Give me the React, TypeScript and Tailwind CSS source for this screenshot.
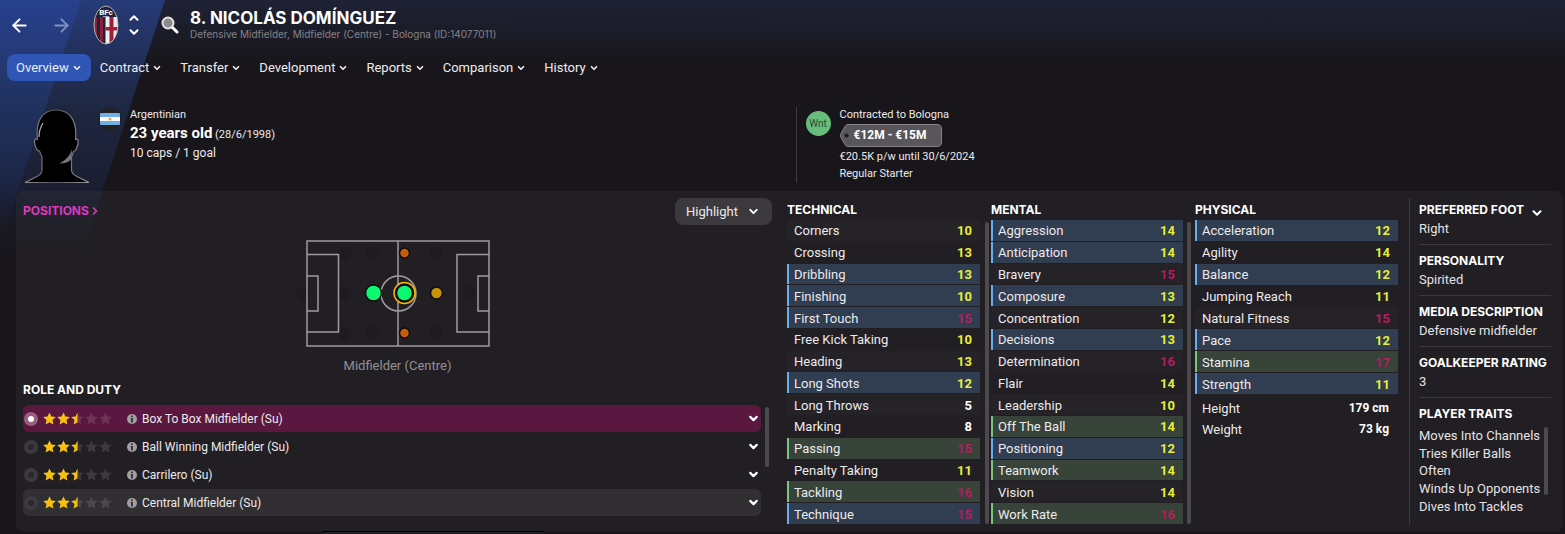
import React from 'react';
import { ArrowLeft, ArrowRight, ChevronDown, ChevronRight, ChevronUp } from 'lucide-react';

type Highlight = 'blue' | 'green' | undefined;

type Attribute = {
  name: string;
  value: number;
  highlight?: Highlight;
};

const menus = ['Overview', 'Contract', 'Transfer', 'Development', 'Reports', 'Comparison', 'History'];

const technical: Attribute[] = [
  { name: 'Corners', value: 10 },
  { name: 'Crossing', value: 13 },
  { name: 'Dribbling', value: 13, highlight: 'blue' },
  { name: 'Finishing', value: 10, highlight: 'blue' },
  { name: 'First Touch', value: 15, highlight: 'blue' },
  { name: 'Free Kick Taking', value: 10 },
  { name: 'Heading', value: 13 },
  { name: 'Long Shots', value: 12, highlight: 'blue' },
  { name: 'Long Throws', value: 5 },
  { name: 'Marking', value: 8 },
  { name: 'Passing', value: 15, highlight: 'green' },
  { name: 'Penalty Taking', value: 11 },
  { name: 'Tackling', value: 16, highlight: 'green' },
  { name: 'Technique', value: 15, highlight: 'blue' },
];

const mental: Attribute[] = [
  { name: 'Aggression', value: 14, highlight: 'blue' },
  { name: 'Anticipation', value: 14, highlight: 'blue' },
  { name: 'Bravery', value: 15 },
  { name: 'Composure', value: 13, highlight: 'blue' },
  { name: 'Concentration', value: 12 },
  { name: 'Decisions', value: 13, highlight: 'blue' },
  { name: 'Determination', value: 16 },
  { name: 'Flair', value: 14 },
  { name: 'Leadership', value: 10 },
  { name: 'Off The Ball', value: 14, highlight: 'green' },
  { name: 'Positioning', value: 12, highlight: 'blue' },
  { name: 'Teamwork', value: 14, highlight: 'green' },
  { name: 'Vision', value: 14 },
  { name: 'Work Rate', value: 16, highlight: 'green' },
];

const physical: Attribute[] = [
  { name: 'Acceleration', value: 12, highlight: 'blue' },
  { name: 'Agility', value: 14 },
  { name: 'Balance', value: 12, highlight: 'blue' },
  { name: 'Jumping Reach', value: 11 },
  { name: 'Natural Fitness', value: 15 },
  { name: 'Pace', value: 12, highlight: 'blue' },
  { name: 'Stamina', value: 17, highlight: 'green' },
  { name: 'Strength', value: 11, highlight: 'blue' },
];

const roles = [
  'Box To Box Midfielder (Su)',
  'Ball Winning Midfielder (Su)',
  'Carrilero (Su)',
  'Central Midfielder (Su)',
];

const details = [
  { title: 'Preferred Foot', text: 'Right' },
  { title: 'Personality', text: 'Spirited' },
  { title: 'Media Description', text: 'Defensive midfielder' },
  { title: 'Goalkeeper Rating', text: '3' },
];

const traits = ['Moves Into Channels', 'Tries Killer Balls Often', 'Winds Up Opponents', 'Dives Into Tackles'];

const heading = "font-['Inter',sans-serif] text-[12px] leading-4 font-bold uppercase text-white";

const valueColor = (value: number) => {
  if (value >= 15) return 'text-[#b51d5c]';
  if (value >= 10) return 'text-[#e6ee3c]';
  return 'text-white';
};

const rowColor = (highlight: Highlight, index: number) => {
  if (highlight === 'blue') return 'bg-[#313d50] border-[#68aef0]';
  if (highlight === 'green') return 'bg-[#38433a] border-[#7cc682]';
  return index % 2 === 0 ? 'bg-[#252328] border-transparent' : 'border-transparent';
};

const Backdrop = () => (
  <svg className="pointer-events-none absolute top-0 left-0" width="180" height="300" viewBox="0 0 180 300" aria-hidden="true">
    <defs>
      <linearGradient id="bright" gradientUnits="userSpaceOnUse" x1="0" y1="0" x2="0" y2="260">
        <stop offset="0" stopColor="#28418f" />
        <stop offset="0.4" stopColor="#213260" />
        <stop offset="0.7" stopColor="#1c2544" />
        <stop offset="1" stopColor="#18161b" stopOpacity="0" />
      </linearGradient>
      <linearGradient id="dim" gradientUnits="userSpaceOnUse" x1="0" y1="0" x2="0" y2="280">
        <stop offset="0" stopColor="#263b78" />
        <stop offset="0.2" stopColor="#222f5a" />
        <stop offset="0.4" stopColor="#1e2640" />
        <stop offset="0.65" stopColor="#1c1f32" />
        <stop offset="1" stopColor="#18161b" stopOpacity="0" />
      </linearGradient>
    </defs>
    <path d="M0 0H165L67 300H0Z" fill="url(#dim)" />
    <path d="M0 0H81L0 246Z" fill="url(#bright)" />
  </svg>
);

const Crest = () => (
  <svg width="26" height="40" viewBox="0 0 26 40" role="img" aria-label="Bologna">
    <clipPath id="crest">
      <ellipse cx="13" cy="20" rx="12" ry="19" />
    </clipPath>
    <g clipPath="url(#crest)">
      <rect width="26" height="40" fill="#1b2340" />
      <rect y="13" width="4" height="27" fill="#8e2036" />
      <rect x="7" y="12" width="3" height="28" fill="#8e2036" />
      <rect x="12.500" y="12" width="13.500" height="28" fill="#f1eeee" />
      <rect x="16.500" y="12" width="4" height="28" fill="#9c2039" />
      <rect x="12.500" y="22" width="13.500" height="3.500" fill="#9c2039" />
      <text x="13" y="9.500" textAnchor="middle" fontSize="8" fontWeight="700" fill="#fff" fontFamily="Roboto, sans-serif">BFc</text>
      <path d="M10 11.500H16" stroke="#aab" strokeWidth="1" />
    </g>
    <ellipse cx="13" cy="20" rx="12" ry="19" fill="none" stroke="#b9b3a8" />
  </svg>
);

const SearchIcon = () => (
  <svg width="18" height="18" viewBox="0 0 18 18" aria-hidden="true">
    <circle cx="7" cy="7" r="5.500" fill="#8b898d" stroke="#e4e1e2" strokeWidth="2" />
    <path d="M11.500 11.500L16 16" stroke="#fff" strokeWidth="3" strokeLinecap="round" />
  </svg>
);

const Portrait = () => (
  <svg width="66" height="74" viewBox="0 0 66 74" role="img" aria-label="Nicolás Domínguez">
    <defs>
      <linearGradient id="rim" x1="0" y1="0" x2="1" y2="0">
        <stop offset="0" stopColor="#8d8a90" />
        <stop offset="0.45" stopColor="#55535a" />
        <stop offset="1" stopColor="#98949a" />
      </linearGradient>
    </defs>
    <path
      d="M1 73.500L13 67.500Q18 65 18 61V48L15.500 42C12 42 9.500 33 11 30.500C12 29.500 13 30 13.500 31C11.500 12 18 1 32 1C46 1 53.500 12 51.500 31C52 30 54 29.500 54 31.500C54.500 35 52.500 42 49.500 42.500L47.500 48V61Q47.500 65 53 67.500L65 73.500Z"
      fill="#000"
      stroke="url(#rim)"
      strokeWidth="1.200"
    />
    <path d="M19 14C16.500 18 15 22 15 28" stroke="#b5b1b6" strokeWidth="1.200" fill="none" />
    <path d="M48 40C46 47 42 51 35 54.500C41 54.500 45 53 47.500 50Z" fill="#77747b" />
  </svg>
);

const Flag = () => (
  <svg width="24" height="24" viewBox="0 0 24 24" role="img" aria-label="Argentina">
    <circle cx="12" cy="12" r="11.500" fill="#222126" />
    <rect x="2" y="6" width="20" height="12" rx="1" fill="#6fb1e4" />
    <rect x="2" y="10" width="20" height="4" fill="#fff" />
    <circle cx="12" cy="12" r="1.500" fill="#d9a441" />
  </svg>
);

const InfoIcon = () => (
  <svg width="10" height="10" viewBox="0 0 10 10" aria-hidden="true">
    <circle cx="5" cy="5" r="5" fill="#a19fa3" />
    <path d="M4.200 1.500H5.800V3H4.200ZM3.700 4H5.800V8.500H4.200V5H3.700Z" fill="#232126" />
  </svg>
);

const starPath = 'M6.5 0.5L8.400 4.600L12.800 5.100L9.500 8.100L10.400 12.500L6.500 10.300L2.600 12.500L3.500 8.100L0.200 5.100L4.600 4.600Z';

const Stars = () => (
  <svg width="70" height="13" viewBox="0 0 70 13" role="img" aria-label="2.5 stars">
    <clipPath id="rated">
      <rect width="34.500" height="13" />
    </clipPath>
    {[0, 14, 28, 42, 56].map((x) => (
      <path key={x} d={starPath} transform={`translate(${x} 0)`} fill="#fff" fillOpacity="0.12" />
    ))}
    <g clipPath="url(#rated)">
      {[0, 14, 28].map((x) => (
        <path key={x} d={starPath} transform={`translate(${x} 0)`} fill="#f8c20c" />
      ))}
    </g>
  </svg>
);

const Pitch = () => (
  <svg className="mx-auto block overflow-visible" width="184" height="107" viewBox="0 0 184 107" role="img" aria-label="Positions on the pitch">
    <g fill="#1d1b20">
      {[[39, 13], [67, 13], [130, 13], [39, 53], [-3, 53], [163, 53], [39, 93], [67, 93], [130, 93]].map(([x, y]) => (
        <circle key={`${x}-${y}`} cx={x} cy={y} r="6.500" />
      ))}
    </g>
    <g fill="none" stroke="#a19b9f" strokeWidth="1.500">
      <rect x="1" y="1" width="182" height="105" />
      <path d="M92 1V106M1 14.500H32.500V92H1M1 36H12V71H1M183 14.500H151V92H183M183 36H172V71H183" />
      <circle cx="92.500" cy="53.500" r="17.500" />
    </g>
    <g stroke="#0d0c0f" strokeWidth="1.500">
      <circle cx="98.500" cy="13" r="5" fill="#c95d07" />
      <circle cx="98.500" cy="93" r="5" fill="#c95d07" />
      <circle cx="130.500" cy="53" r="6" fill="#c79206" />
      <circle cx="67.500" cy="53" r="8" fill="#0bf970" />
      <circle cx="98.500" cy="53" r="9" fill="#17151a" />
      <circle cx="98.500" cy="53" r="8" fill="#0bf970" />
    </g>
    <circle cx="98.500" cy="53" r="10.500" fill="none" stroke="#f5b80a" strokeWidth="1.500" />
  </svg>
);

type AttributeTableProps = {
  title: string;
  rows: Attribute[];
  className?: string;
};

const AttributeTable: React.FC<AttributeTableProps> = ({ title, rows, className }) => (
  <table className={`w-full border-separate border-spacing-x-0 border-spacing-y-px text-[13px] leading-[19px] ${className}`}>
    <caption className={`${heading} pb-px text-left`}>{title}</caption>
    <tbody>
      {rows.map((row, i) => (
        <tr key={row.name}>
          <th scope="row" className={`border-l-2 p-0 pt-px pl-[5px] text-left font-normal text-[#eceaec] ${rowColor(row.highlight, i)}`}>
            {row.name}
          </th>
          <td className={`p-0 pt-px pr-2 text-right font-bold ${rowColor(row.highlight, i)} ${valueColor(row.value)}`}>
            {row.value}
          </td>
        </tr>
      ))}
    </tbody>
  </table>
);

const ScrollThumb: React.FC<{ className?: string }> = ({ className }) => (
  <div className={`w-1 shrink-0 rounded-full bg-[#4c4a4e] ${className}`} />
);

const Header = () => (
  <header className="relative">
    <div className="flex h-[50px] items-center">
      <button aria-label="Back" className="ml-[9px] text-white">
        <ArrowLeft size={21} strokeWidth={2.2} />
      </button>
      <button aria-label="Forward" className="ml-[21px] text-[#7f8fbd]">
        <ArrowRight size={21} strokeWidth={2.2} />
      </button>
      <div className="ml-[21px]">
        <Crest />
      </div>
      <div className="ml-2 flex flex-col text-white">
        <button aria-label="Previous player"><ChevronUp size={14} strokeWidth={3.5} /></button>
        <button aria-label="Next player"><ChevronDown size={14} strokeWidth={3.5} /></button>
      </div>
      <button aria-label="Search" className="ml-5">
        <SearchIcon />
      </button>
      <div className="ml-[11px]">
        <h1 className="font-['Inter',sans-serif] text-[17px] leading-[18px] font-bold text-white">8. NICOLÁS DOMÍNGUEZ</h1>
        <p className="font-['Inter',sans-serif] text-[10px] leading-[14px] text-[#858389]">Defensive Midfielder, Midfielder (Centre) - Bologna (ID:14077011)</p>
      </div>
    </div>
    <nav className="flex pt-1 pl-[7px]">
      {menus.map((menu) => (
        <button
          key={menu}
          className={`flex h-[27px] items-center gap-[3px] rounded-lg px-[9px] text-[13px] text-[#eeecee] ${menu === 'Overview' ? 'bg-[#2f56b4]' : ''}`}
        >
          {menu}
          <ChevronDown size={10} strokeWidth={4} />
        </button>
      ))}
    </nav>
  </header>
);

const Profile = () => (
  <section className="relative flex h-[84px] text-[#eceaec]">
    <div className="flex w-[calc(50%+13px)] shrink-0 pl-6">
      <div className="pt-[2px]">
        <Portrait />
      </div>
      <div className="ml-2">
        <Flag />
      </div>
      <div className="ml-2">
        <p className="pt-px text-[11px] leading-[14px]">Argentinian</p>
        <p className="mt-px text-[11px] leading-5">
          <strong className="text-[15px] font-bold text-white">23 years old</strong> (28/6/1998)
        </p>
        <p className="text-[12px] leading-4">10 caps / 1 goal</p>
      </div>
    </div>
    <div className="flex h-[76px] border-l border-[#3d3b40] pl-[9px] text-[11px]">
      <span className="mt-1 flex h-[25px] w-[25px] items-center justify-center rounded-full bg-[#66bd7c] text-[10px] text-[#2c4b35]">Wnt</span>
      <div className="ml-[9px]">
        <p className="pt-px leading-[14px]">Contracted to Bologna</p>
        <div className="relative mt-[2px] h-[23px] w-[102px]">
          <svg className="absolute inset-0" width="102" height="23" viewBox="0 0 102 23" aria-hidden="true">
            <path d="M8 0.500H97Q101.500 0.500 101.500 5V18Q101.500 22.500 97 22.500H8Q6 22.500 5 20.500L1 13.500Q0 11.500 1 9.500L5 2.500Q6 0.500 8 0.500Z" fill="#58565a" stroke="#858387" />
            <circle cx="6.500" cy="11.500" r="2" fill="#1c1a1f" />
          </svg>
          <strong className="relative pl-[14px] text-[12px] leading-[23px] font-bold text-white">€12M - €15M</strong>
        </div>
        <p className="mt-[2px] leading-[16px]">€20.5K p/w until 30/6/2024</p>
        <p className="leading-[18px]">Regular Starter</p>
      </div>
    </div>
  </section>
);

const Positions = () => (
  <section className="pr-[15px]">
    <div className="flex justify-between">
      <a href="#positions" className={`${heading} mt-[5px] flex h-4 items-center text-[#dc39bd]!`}>
        Positions <ChevronRight size={12} strokeWidth={3.5} />
      </a>
      <div className="relative flex items-center">
        <select aria-label="Highlight" className="h-[27px] w-[97px] appearance-none rounded-lg bg-[#3c393e] pl-[11px] text-[13px] text-[#eceaec]">
          <option>Highlight</option>
        </select>
        <ChevronDown size={13} strokeWidth={3.5} className="pointer-events-none absolute right-3 text-white" />
      </div>
    </div>
    <div className="mt-[15px]">
      <Pitch />
      <p className="mt-[10px] text-center text-[13px] leading-[18px] text-[#929095]">Midfielder (Centre)</p>
    </div>
    <h2 className={`${heading} mt-[7px]`}>Role and Duty</h2>
    <div className="mt-[7px] flex gap-1 pr-[3px]">
      <ul className="flex flex-1 flex-col gap-[1px]">
        {roles.map((role, i) => (
          <li
            key={role}
            className={`flex h-[27px] items-center rounded-md pr-[1px] ${i === 0 ? 'bg-[#5a1740]' : ''} ${i === 3 ? 'bg-[#312f32]' : ''}`}
          >
            <label className="flex flex-1 items-center text-[12px] text-[#eceaec]">
              <input
                type="radio"
                name="role"
                defaultChecked={i === 0}
                className="ml-[1px] h-[14px] w-[14px] appearance-none rounded-full border-4 border-[#3c3a3e] bg-[#2a282d] checked:border-[#96607f] checked:bg-white"
              />
              <span className="ml-[5px]"><Stars /></span>
              <span className="ml-[14px]"><InfoIcon /></span>
              <span className="ml-[5px]">{role}</span>
            </label>
            <button aria-label={`${role} details`} className="text-white">
              <ChevronDown size={13} strokeWidth={4} />
            </button>
          </li>
        ))}
      </ul>
      <ScrollThumb className="mt-[2px] h-[60px]" />
    </div>
  </section>
);

const Details = () => (
  <aside className="border-l border-[#3d3b40] pt-1 pl-[9px] text-[13px] text-[#e4e2e5]">
    {details.map((item, i) => (
      <div key={item.title} className="mb-2 border-b border-[#3a383d] pb-[6px]">
        <h2 className={`${heading} flex items-center whitespace-nowrap`}>
          {item.title}
          {i === 0 && (
            <button aria-label="More details" className="ml-[6px] h-4 pt-1">
              <ChevronDown size={14} strokeWidth={3.5} />
            </button>
          )}
        </h2>
        <p className="mt-[2px] leading-[18px]">{item.text}</p>
      </div>
    ))}
    <h2 className={heading}>Player Traits</h2>
    <div className="mt-[5px] flex">
      <ul className="flex flex-1 flex-col gap-[1px]">
        {traits.map((trait) => (
          <li key={trait} className="leading-[17px]">{trait}</li>
        ))}
      </ul>
      <ScrollThumb className="mr-[3px] h-[68px]" />
    </div>
  </aside>
);

const App: React.FC = () => {
  return (
    <div className="relative min-h-screen overflow-hidden bg-[#18161b] bg-linear-to-b from-[#1f2236] to-[#18161b] to-[64px] font-['Roboto',sans-serif]">
      <Backdrop />
      <Header />
      <div className="pt-[26px]">
        <Profile />
      </div>
      <main className="relative mr-[2px] ml-4 grid grid-cols-[764fr_204fr_204fr_214fr_142fr] rounded-lg bg-white/4 pt-[7px] pr-3 pb-[7px] pl-[7px]">
        <Positions />
        <section className="flex items-start gap-[5px] pt-1 pr-[2px]">
          <AttributeTable title="Technical" rows={technical} className="h-[306px]" />
          <ScrollThumb className="mt-5 h-[302px]" />
        </section>
        <section className="flex items-start gap-1 pt-1 pr-1">
          <AttributeTable title="Mental" rows={mental} className="h-[306px]" />
          <ScrollThumb className="mt-5 h-[302px]" />
        </section>
        <section className="pt-1 pr-[11px]">
          <AttributeTable title="Physical" rows={physical} className="h-[176px]" />
          <dl className="mt-[3px] grid grid-cols-2 px-[7px] pr-[9px] text-[13px] leading-[21px] text-[#eceaec]">
            <dt>Height</dt>
            <dd className="text-right text-[12px] font-bold text-white">179 cm</dd>
            <dt>Weight</dt>
            <dd className="text-right text-[12px] font-bold text-white">73 kg</dd>
          </dl>
        </section>
        <Details />
      </main>
      <div className="absolute bottom-0 left-[321px] h-[3px] w-[224px] rounded-t-md border-t border-black bg-[#222025]" />
    </div>
  );
};

export default App;
